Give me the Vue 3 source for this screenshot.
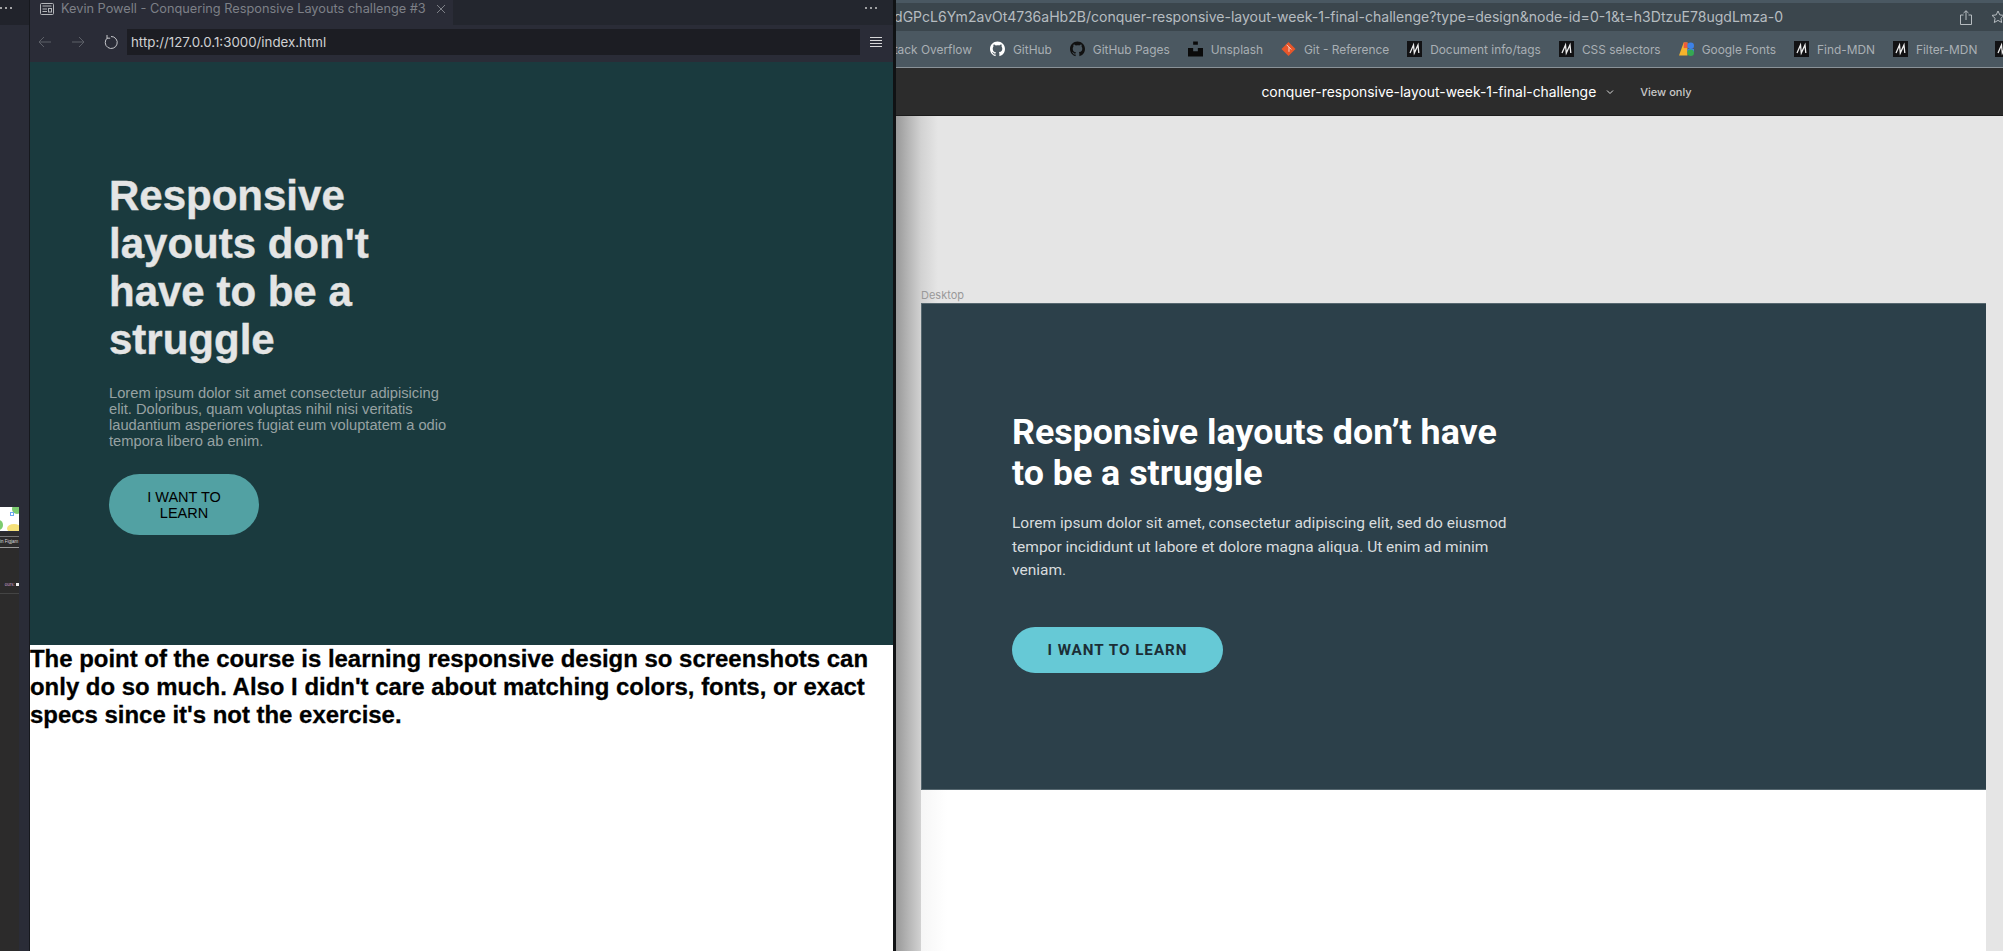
<template>
  <div class="screen">
    <aside class="rail">
      <div class="rail-top">
        <svg class="dots" viewBox="0 0 14 4" fill="currentColor">
          <circle cx="2" cy="2" r="1" />
          <circle cx="7" cy="2" r="1" />
          <circle cx="12" cy="2" r="1" />
        </svg>
      </div>
      <div class="rail-body">
        <div class="rail-panel">
          <div class="rail-thumb">
            <span class="blob green top"></span>
            <span class="blob green side"></span>
            <span class="blob yellow"></span>
            <span class="blob-dot"></span>
          </div>
          <div class="rail-label">in Figjam</div>
          <div class="rail-code">ours: <i></i></div>
        </div>
      </div>
    </aside>

    <section class="preview">
      <div class="tabbar">
        <div class="tab">
          <svg class="tab-icon" viewBox="0 0 14 12" fill="none" stroke="currentColor" stroke-width="1">
            <rect x="0.500" y="0.500" width="13" height="11" rx="1" />
            <line x1="2.500" y1="3" x2="11.500" y2="3" />
            <line x1="2.500" y1="6" x2="7" y2="6" />
            <line x1="2.500" y1="8.500" x2="7" y2="8.500" />
            <rect x="8.500" y="5.500" width="3" height="3.500" />
          </svg>
          <span class="tab-title">Kevin Powell - Conquering Responsive Layouts challenge #3</span>
          <svg class="tab-close" viewBox="0 0 10 10" fill="none" stroke="currentColor" stroke-width="1">
            <line x1="1" y1="1" x2="9" y2="9" />
            <line x1="9" y1="1" x2="1" y2="9" />
          </svg>
        </div>
        <svg class="tab-more" viewBox="0 0 14 4" fill="currentColor">
          <circle cx="2" cy="2" r="1" />
          <circle cx="7" cy="2" r="1" />
          <circle cx="12" cy="2" r="1" />
        </svg>
      </div>
      <div class="urlbar">
        <svg class="nav dim" viewBox="0 0 14 14" fill="none" stroke="currentColor" stroke-width="1">
          <path d="M13 7H1M6 2L1 7l5 5" />
        </svg>
        <svg class="nav dim" viewBox="0 0 14 14" fill="none" stroke="currentColor" stroke-width="1">
          <path d="M1 7h12M8 2l5 5-5 5" />
        </svg>
        <svg class="nav" viewBox="0 0 14 14" fill="none" stroke="currentColor" stroke-width="1">
          <path d="M3.500 2.800A6 6 0 1 0 7 1.500M3 0v3.200h3.200" />
        </svg>
        <div class="url">http://127.0.0.1:3000/index.html</div>
        <svg class="menu" viewBox="0 0 12 10" fill="none" stroke="currentColor" stroke-width="1">
          <path d="M0 .5h12M0 3.500h12M0 6.500h12M0 9.500h12" />
        </svg>
      </div>
      <div class="page">
        <div class="left-hero">
          <h1>Responsive layouts don't have to be a struggle</h1>
          <p>Lorem ipsum dolor sit amet consectetur adipisicing elit. Doloribus, quam voluptas nihil nisi veritatis laudantium asperiores fugiat eum voluptatem a odio tempora libero ab enim.</p>
          <button class="left-btn">I WANT TO LEARN</button>
        </div>
        <h2 class="note">The point of the course is learning responsive design so screenshots can only do so much. Also I didn't care about matching colors, fonts, or exact specs since it's not the exercise.</h2>
      </div>
    </section>

    <section class="browser">
      <div class="address">
        <span class="address-text">/dGPcL6Ym2avOt4736aHb2B/conquer-responsive-layout-week-1-final-challenge?type=design&amp;node-id=0-1&amp;t=h3DtzuE78ugdLmza-0</span>
        <svg class="share" viewBox="0 0 12 15" fill="none" stroke="currentColor" stroke-width="1">
          <path d="M3.500 5H.5v9.500h11V5h-3M6 10V.8M3.500 3L6 .8 8.500 3" />
        </svg>
        <svg class="star" viewBox="0 0 14 14" fill="none" stroke="currentColor" stroke-width="1">
          <path d="M7 1l1.800 3.900 4.200.5-3.100 2.900.8 4.200L7 10.400 3.300 12.500l.8-4.200L1 5.400l4.200-.5z" />
        </svg>
      </div>
      <div class="bookmarks">
        <div class="bookmark so"><span>Stack Overflow</span></div>
        <div v-for="b in bookmarks" :key="b.label" class="bookmark">
          <svg v-if="b.icon === 'github'" class="bm-icon" :class="{ light: b.light }" viewBox="0 0 16 16" fill="currentColor">
            <path d="M8 0C3.580 0 0 3.580 0 8c0 3.540 2.290 6.530 5.470 7.590.4.070.55-.170.550-.380v-1.340c-2.230.480-2.700-1.070-2.700-1.070-.360-.930-.890-1.170-.890-1.170-.730-.500.060-.490.060-.490.800.060 1.230.830 1.230.830.710 1.220 1.870.870 2.330.660.070-.520.280-.870.510-1.070-1.780-.200-3.640-.890-3.640-3.950 0-.870.310-1.590.820-2.150-.080-.200-.360-1.020.080-2.120 0 0 .670-.210 2.200.820A7.700 7.700 0 0 1 8 3.870c.680 0 1.360.090 2 .270 1.530-1.040 2.200-.820 2.200-.820.440 1.100.160 1.920.080 2.120.510.560.820 1.270.820 2.150 0 3.070-1.870 3.750-3.650 3.950.290.250.540.730.540 1.480v2.190c0 .210.150.460.550.380A8 8 0 0 0 16 8c0-4.420-3.580-8-8-8z" />
          </svg>
          <svg v-else-if="b.icon === 'unsplash'" class="bm-icon" viewBox="0 0 16 16" fill="#0a0a0a">
            <path d="M5.500 0h5v3.500h-5zM0 7h5.500v3.500h5V7H16v9H0z" />
          </svg>
          <svg v-else-if="b.icon === 'git'" class="bm-icon" viewBox="0 0 16 16">
            <path d="M8 .5L15.500 8 8 15.500.5 8z" fill="#e8562a" />
            <path d="M6 3.500l2.500 2.500v5M8.500 6l2.500 2.500" fill="none" stroke="#f3d9cf" stroke-width="1" />
          </svg>
          <svg v-else-if="b.icon === 'google'" class="bm-icon" viewBox="0 0 16 16">
            <path d="M0 15L5 1h4v14z" fill="#f5b32c" />
            <path d="M5 1h4v6H5z" fill="#ef5a3c" />
            <circle cx="12.500" cy="4.500" r="3.500" fill="#3d82e8" />
            <path d="M9 8h7v3.500H9z" fill="#3d82e8" />
            <circle cx="12.500" cy="12" r="3.500" fill="#35a853" />
          </svg>
          <svg v-else class="bm-icon" viewBox="0 0 15 16">
            <rect width="15" height="16" fill="#121214" />
            <path d="M3 12L6.500 4l.8 8L11 4l.8 8" fill="none" stroke="#eee" stroke-width="1.300" />
          </svg>
          <span class="bm-label">{{ b.label }}</span>
        </div>
      </div>
      <div class="figma-bar">
        <span class="file-name">conquer-responsive-layout-week-1-final-challenge</span>
        <svg class="chev" viewBox="0 0 8 6" fill="none" stroke="currentColor" stroke-width="1">
          <path d="M1 1.500l3 3 3-3" />
        </svg>
        <span class="view-only">View only</span>
      </div>
      <div class="canvas">
        <div class="frame-label">Desktop</div>
        <div class="frame">
          <div class="frame-hero">
            <h2>Responsive layouts don’t have to be a struggle</h2>
            <p>Lorem ipsum dolor sit amet, consectetur adipiscing elit, sed do eiusmod tempor incididunt ut labore et dolore magna aliqua. Ut enim ad minim veniam.</p>
            <button class="frame-btn">I WANT TO LEARN</button>
          </div>
        </div>
      </div>
    </section>
  </div>
</template>

<script setup>
const bookmarks = [
  { label: 'GitHub', icon: 'github', light: true },
  { label: 'GitHub Pages', icon: 'github' },
  { label: 'Unsplash', icon: 'unsplash' },
  { label: 'Git - Reference', icon: 'git' },
  { label: 'Document info/tags', icon: 'mdn' },
  { label: 'CSS selectors', icon: 'mdn' },
  { label: 'Google Fonts', icon: 'google' },
  { label: 'Find-MDN', icon: 'mdn' },
  { label: 'Filter-MDN', icon: 'mdn' },
  { label: 'MDN', icon: 'mdn' }
]
</script>

<style>
html, body {
  margin: 0;
  overflow: hidden;
  background: #fff;
}
</style>

<style scoped>
.screen {
  display: flex;
  width: 2003px;
  height: 951px;
  overflow: hidden;
  font-family: "Liberation Sans", Arial, sans-serif;
}

.rail {
  width: 30px;
  flex-shrink: 0;
  display: flex;
  flex-direction: column;
  box-sizing: border-box;
  border-right: 1px solid #16181d;
  overflow: hidden;
  color: #d0d0d0;
}

.rail-top {
  height: 25px;
  flex-shrink: 0;
  background: #21232b;
}

.dots {
  display: block;
  width: 14px;
  height: 4px;
  margin: 6px 0 0 -1px;
}

.rail-body {
  flex: 1;
  background: #2a2c37;
}

.rail-panel {
  width: 19px;
  height: 100%;
  padding-top: 482px;
  box-sizing: border-box;
  background: linear-gradient(#2a2c37 507px, #2c2b2b 507px);
}

.rail-thumb {
  position: relative;
  height: 24px;
  background: #fff;
  overflow: hidden;
}

.blob {
  position: absolute;
  border-radius: 50%;
}

.blob.green {
  background: #7ccb6f;
}

.blob.top {
  width: 10px;
  height: 10px;
  right: -3px;
  top: -3px;
}

.blob.side {
  width: 8px;
  height: 10px;
  left: -5px;
  bottom: 1px;
}

.blob.yellow {
  width: 14px;
  height: 9px;
  right: -2px;
  bottom: -2px;
  background: #f5e17a;
}

.blob-dot {
  position: absolute;
  left: 10px;
  top: 5px;
  width: 2px;
  height: 2px;
  border: 1px solid #6ca8f0;
}

.rail-label {
  margin-top: 5px;
  height: 10px;
  border-top: 1px solid #777;
  border-bottom: 1px solid #999;
  font-size: 4.500px;
  line-height: 10px;
  white-space: nowrap;
  overflow: hidden;
  color: #ddd;
}

.rail-code {
  margin-top: 34px;
  padding-bottom: 5px;
  border-bottom: 1px solid #444;
  font-size: 4.500px;
  line-height: 6px;
  color: #c79cc4;
  white-space: nowrap;
  text-align: right;
}

.rail-code i {
  display: inline-block;
  width: 3px;
  height: 3px;
  background: #eee;
}

.preview {
  width: 863px;
  flex-shrink: 0;
  display: flex;
  flex-direction: column;
  background: #fff;
}

.tabbar {
  height: 25px;
  display: flex;
  justify-content: space-between;
  background: #23262e;
  flex-shrink: 0;
}

.tab {
  width: 423px;
  padding: 0 0 8px 10px;
  display: flex;
  align-items: center;
  box-sizing: border-box;
  background: #2a2c37;
  color: #7d8087;
}

.tab-icon {
  width: 14px;
  height: 12px;
  color: #b4b6ba;
  margin-right: 7px;
}

.tab-title {
  font-family: Inter, "Liberation Sans", sans-serif;
  font-size: 12.750px;
  white-space: nowrap;
}

.tab-close {
  width: 10px;
  height: 10px;
  margin-left: 10px;
}

.tab-more {
  width: 14px;
  height: 4px;
  margin: 6px 15px 0 0;
  color: #c8c8c8;
}

.urlbar {
  height: 37px;
  display: flex;
  align-items: center;
  background: #2a2c37;
  box-sizing: border-box;
  padding: 4px 10px 7px 8px;
  flex-shrink: 0;
}

.nav {
  width: 14px;
  height: 14px;
  margin-right: 19px;
  color: #c4c5c9;
}

.nav.dim {
  color: #5d6068;
}

.url {
  width: 733px;
  height: 26px;
  margin-left: -10px;
  padding-left: 4px;
  box-sizing: border-box;
  background: #1c1d23;
  color: #d0d1d3;
  font-family: Inter, "Liberation Sans", sans-serif;
  font-size: 13.300px;
  line-height: 27px;
}

.menu {
  width: 12px;
  height: 10px;
  margin-left: 10px;
  color: #d6d6d8;
}

.page {
  flex: 1;
  display: flex;
  flex-direction: column;
}

.left-hero {
  height: 583px;
  box-sizing: border-box;
  padding: 110px 0 0 79px;
  background: #1a3a3e;
}

.left-hero h1 {
  width: 340px;
  margin: 0;
  color: #e4e5e5;
  font-size: 42px;
  line-height: 48px;
  font-weight: bold;
  -webkit-text-stroke: 0.400px #e4e5e5;
}

.left-hero p {
  width: 340px;
  margin: 21px 0 0;
  color: #97a2a3;
  font-size: 14.700px;
  line-height: 16px;
}

.left-btn {
  display: block;
  width: 150px;
  height: 61px;
  margin-top: 25px;
  padding: 0 20px;
  border: 0;
  border-radius: 31px;
  background: #52a1a3;
  color: #000;
  font-family: "Liberation Sans", Arial, sans-serif;
  font-size: 14.500px;
  line-height: 16px;
}

.note {
  margin: 0;
  color: #000;
  font-size: 23.950px;
  line-height: 28px;
  font-weight: bold;
  -webkit-text-stroke: 0.300px #000;
}

.browser {
  flex: 1;
  min-width: 0;
  display: flex;
  flex-direction: column;
  border-left: 3px solid #101214;
  background: #fff;
}

.address {
  height: 31px;
  box-sizing: border-box;
  border-top: 3px solid #4a5862;
  padding-bottom: 1px;
  display: flex;
  align-items: center;
  background: #3b464d;
  color: #b6bcc0;
  flex-shrink: 0;
  position: relative;
  overflow: hidden;
}

.address-text {
  font-family: Inter, "Liberation Sans", sans-serif;
  font-size: 14.040px;
  white-space: nowrap;
  margin-left: -7px;
}

.share {
  position: absolute;
  right: 31px;
  top: 7px;
  width: 12px;
  height: 15px;
}

.star {
  position: absolute;
  right: -2px;
  top: 7px;
  width: 14px;
  height: 14px;
}

.bookmarks {
  height: 37px;
  box-sizing: border-box;
  border-bottom: 1px solid #8a9298;
  display: flex;
  align-items: center;
  gap: 18px;
  background: #4b5861;
  overflow: hidden;
  flex-shrink: 0;
  white-space: nowrap;
  color: #a9afb4;
  font-family: Inter, "Liberation Sans", sans-serif;
  font-size: 11.900px;
}

.bookmark {
  display: flex;
  align-items: center;
  flex-shrink: 0;
  gap: 8px;
}

.bookmark.so {
  width: 76px;
  overflow: hidden;
  justify-content: flex-end;
}

.bm-icon {
  width: 15px;
  height: 16px;
  color: #111;
}

.bm-icon.light {
  color: #fff;
}

.figma-bar {
  height: 48px;
  box-sizing: border-box;
  display: flex;
  align-items: center;
  justify-content: center;
  background: #2c2c2c;
  border-bottom: 1px solid #1c1c1c;
  flex-shrink: 0;
  color: #fff;
  font-family: Inter, "Liberation Sans", sans-serif;
}

.file-name {
  font-size: 13.900px;
  margin-left: 54px;
}

.chev {
  width: 8px;
  height: 6px;
  margin-left: 10px;
  color: #ddd;
}

.view-only {
  font-size: 11px;
  font-weight: 500;
  color: #c8c8c8;
  margin-left: 26px;
}

.canvas {
  flex: 1;
  box-sizing: border-box;
  padding: 172px 0 0 25px;
  background: linear-gradient(90deg, #999 0, #d2d2d2 25px, #e5e5e5 42px);
}

.frame-label {
  color: #999;
  font-family: Inter, "Liberation Sans", sans-serif;
  font-size: 11px;
  line-height: 15px;
}

.frame {
  width: 1065px;
  height: 100%;
  background: linear-gradient(90deg, #f6f6f6, #fff 26px);
}

.frame-hero {
  height: 487px;
  box-sizing: border-box;
  padding: 108px 0 0 90px;
  border: 1px solid #56676f;
  border-width: 1px 0 1px 1px;
  background: #2c404a;
  color: #fff;
  font-family: Roboto, "Liberation Sans", sans-serif;
}

.frame-hero h2 {
  width: 520px;
  margin: 0;
  font-size: 35.800px;
  line-height: 41px;
  font-weight: 700;
}

.frame-hero p {
  width: 500px;
  margin: 18px 0 0;
  font-size: 15.500px;
  line-height: 23.600px;
  color: #d8dcde;
}

.frame-btn {
  display: block;
  width: 211px;
  height: 46px;
  margin-top: 44px;
  border: 0;
  border-radius: 23px;
  background: #66c9d6;
  color: #1c2e36;
  font-family: Roboto, "Liberation Sans", sans-serif;
  font-size: 15.200px;
  font-weight: 700;
  letter-spacing: 1px;
}
</style>
